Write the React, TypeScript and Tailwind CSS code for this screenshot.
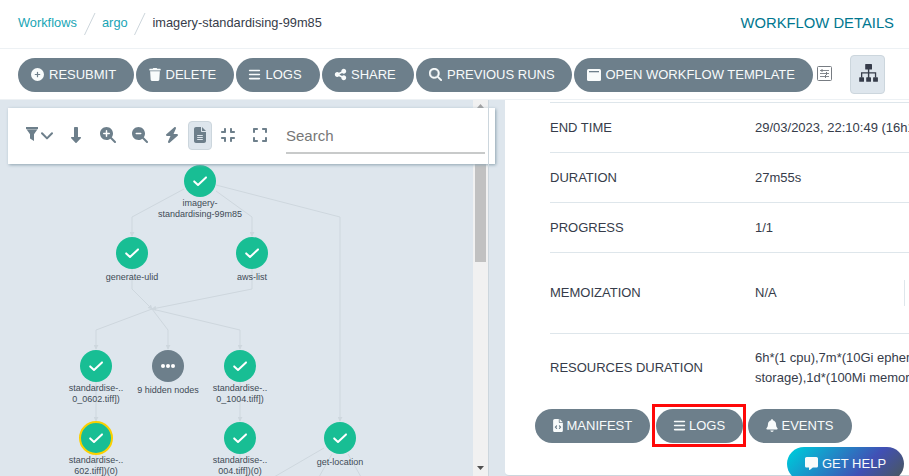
import React from 'react';
import {
  FaBars, FaBell, FaBolt, FaCirclePlus, FaCompress, FaDownLong, FaExpand,
  FaFileCode, FaFileLines, FaMagnifyingGlass, FaMagnifyingGlassMinus, FaMagnifyingGlassPlus,
  FaMessage, FaShareNodes,
} from 'react-icons/fa6';
import { FaTrash } from 'react-icons/fa';

function WindowIcon() {
  return (
    <svg width="14" height="12" viewBox="0 0 14 12">
      <rect width="14" height="12" rx="1.5" fill="#f8fbfb" />
      <rect x="2" y="2" width="10" height="1.3" fill="#6d7f8b" />
    </svg>
  );
}

function FilterIcon() {
  return (
    <svg width="12" height="14" viewBox="0 0 12 14" fill="#6d7f8b">
      <path d="M0 0h12v2H0zM1 3h10L8 7.3V14L4 11.5V7.3z" />
      <path d="M.3 2h11.4l-.7 1H1z" opacity=".65" />
    </svg>
  );
}

function ChevronIcon() {
  return (
    <svg width="12" height="8" viewBox="0 0 12 8" fill="none" stroke="#6d7f8b" strokeWidth="2" strokeLinecap="round" strokeLinejoin="round">
      <path d="M1 1.2L6 6.4L11 1.2" />
    </svg>
  );
}

function SitemapIcon() {
  return (
    <svg width="19" height="18" viewBox="0 0 19 18" fill="#363c4a">
      <rect x="6.2" y="0" width="6.8" height="5.6" rx=".6" />
      <path d="M8.9 5h1.4v9H8.9zM2 8.3h15.2v5.2h-1.3V9.6H3.3v3.9H2z" />
      <rect x=".2" y="13.2" width="4.8" height="4.6" rx=".6" />
      <rect x="7.2" y="13.2" width="4.8" height="4.6" rx=".6" />
      <rect x="14.1" y="13.2" width="4.8" height="4.6" rx=".6" />
    </svg>
  );
}

function SlidersIcon() {
  return (
    <svg width="15" height="15" viewBox="0 0 15 15" fill="none" stroke="#777c82">
      <rect x=".5" y=".5" width="14" height="14" rx="1" />
      <path d="M3 4.5h9M3 7.5h9M3 10.5h9" strokeWidth=".9" />
      <path d="M5 3v3M9.5 6v3M8.5 9v3" />
    </svg>
  );
}

const actions = [
  { label: 'RESUBMIT', icon: <FaCirclePlus size={13} />, width: 'w-[116px]', pad: 'pl-[13px]', gap: 'gap-[5px]' },
  { label: 'DELETE', icon: <FaTrash className="h-[13px] w-[12px]" />, width: 'w-[98px]', pad: 'pl-[13px]', gap: 'gap-[4.5px]' },
  { label: 'LOGS', icon: <FaBars size={13} />, width: 'w-[84px]', pad: 'pl-[12px]', gap: 'gap-[4.5px]' },
  { label: 'SHARE', icon: <FaShareNodes size={13} />, width: 'w-[92px]', pad: 'pl-[12px]', gap: 'gap-[4px]' },
  { label: 'PREVIOUS RUNS', icon: <FaMagnifyingGlass className="stroke-current stroke-[16px]" size={13} />, width: 'w-[156px]', pad: 'pl-[13px]', gap: 'gap-[5px]' },
  { label: 'OPEN WORKFLOW TEMPLATE', icon: <WindowIcon />, width: 'w-[239px]', pad: 'pl-[13px]', gap: 'gap-[4.5px]' },
];

const tools = [
  { name: 'direction', icon: <FaDownLong size={16} /> },
  { name: 'zoom in', icon: <FaMagnifyingGlassPlus size={16} /> },
  { name: 'zoom out', icon: <FaMagnifyingGlassMinus size={16} /> },
  { name: 'fast', icon: <FaBolt size={16} /> },
  { name: 'labels', icon: <FaFileLines size={16} />, active: true },
  { name: 'compress', icon: <FaCompress size={16} /> },
  { name: 'expand', icon: <FaExpand size={16} /> },
];

type GraphNode = { x: number; y: number; lines: string[]; kind?: 'selected' | 'hidden' };

// Node centres inside the graph canvas, whose origin is its top left corner.
const nodes: GraphNode[] = [
  { x: 200, y: 81, lines: ['imagery-', 'standardising-99m85'] },
  { x: 132, y: 153, lines: ['generate-ulid'] },
  { x: 252, y: 153, lines: ['aws-list'] },
  { x: 96, y: 266, lines: ['standardise-..', '0_0602.tiff])'] },
  { x: 168, y: 266, lines: ['9 hidden nodes'], kind: 'hidden' },
  { x: 240, y: 266, lines: ['standardise-..', '0_1004.tiff])'] },
  { x: 96, y: 338, lines: ['standardise-..', '602.tiff])(0)'], kind: 'selected' },
  { x: 240, y: 338, lines: ['standardise-..', '004.tiff])(0)'] },
  { x: 340, y: 338, lines: ['get-location'] },
];

const edges = [
  'M184 89L132 117V136', 'M216 91L252 117V136', 'M216 85L340 117V321',
  'M132 169V189L152 209', 'M252 169V189L152 209',
  'M152 209L96 230V249', 'M152 209L168 230V249', 'M152 209L240 230V249',
  'M96 282V321', 'M240 282V321', 'M96 354V384', 'M240 354V384',
  'M324 348L262 384', 'M332 354L315 384', 'M348 354L365 384',
];

function Node({ x, y, lines, kind }: GraphNode) {
  const single = lines.length === 1;
  return (
    <div className="absolute w-[100px] -translate-x-1/2 text-center" style={{ left: x, top: y - 16 }}>
      <div
        className={`mx-auto flex size-8 items-center justify-center rounded-full ${kind === 'hidden' ? 'bg-[#6d7f8b]' : 'bg-[#18be94]'} ${kind === 'selected' ? 'outline-2 -outline-offset-1 outline-[#fbd000]' : ''}`}
      >
        <svg width="16" height="16" viewBox="0 0 16 16" fill="none" stroke="white" strokeWidth="2" strokeLinecap="round" strokeLinejoin="round">
          {kind === 'hidden'
            ? <g fill="white" stroke="none"><circle cx="3" cy="8" r="2" /><circle cx="8" cy="8" r="2" /><circle cx="13" cy="8" r="2" /></g>
            : <path d="M2.2 8.4L6 12L14 4.4" />}
        </svg>
      </div>
      <div className={`text-[9px] leading-[11px] whitespace-nowrap text-[#3f4b56] ${single ? 'pt-[3px]' : 'pt-px'}`}>
        {lines.map((line) => <div key={line}>{line}</div>)}
      </div>
    </div>
  );
}

function Row({ label, children, height }: { label: string; children: React.ReactNode; height: string }) {
  return (
    <div className={`flex shrink-0 items-center border-t border-[#dee6eb] ${height}`}>
      <div className="w-[205px] shrink-0">{label}</div>
      <div className="whitespace-nowrap leading-5">{children}</div>
    </div>
  );
}

export default function App() {
  return (
    <div className="relative flex h-[476px] w-[909px] flex-col overflow-hidden bg-white font-['Liberation_Sans',Arial,sans-serif] text-[13px] text-[#363c4a]">
      <header className="flex h-[49px] shrink-0 items-center justify-between border-b border-[#edf1f4] pr-[15px] pl-[18px] pb-[2px]">
        <div className="flex items-center text-[12.8px] text-[#18a5b5]">
          <span className="w-[59px] whitespace-nowrap">Workflows</span>
          <svg className="ml-[7px] mt-[2px]" width="12" height="22"><path d="M.5 22L11 0" stroke="#ccd5db" /></svg>
          <span className="ml-[6px] w-[25px]">argo</span>
          <svg className="ml-[7px] mt-[2px]" width="12" height="22"><path d="M.5 22L11 0" stroke="#ccd5db" /></svg>
          <span className="ml-[6.5px] text-[#363c4a]">imagery-standardising-99m85</span>
        </div>
        <div className="pt-px text-[14.8px] text-[#007790]">WORKFLOW DETAILS</div>
      </header>

      <nav className="flex h-[51px] shrink-0 items-center border-b border-[#edf1f4] pl-[18px]">
        <div className="mt-px flex gap-[2px]">
          {actions.map((a) => (
            <button key={a.label} className={`flex h-[34px] shrink-0 items-center rounded-full bg-[#6d7f8b] whitespace-nowrap text-[#f8fbfb] ${a.width} ${a.pad} ${a.gap}`}>
              {a.icon}<span>{a.label}</span>
            </button>
          ))}
        </div>
        <div className="ml-1 mb-px"><SlidersIcon /></div>
        <button className="ml-[18px] flex h-[39px] w-[35px] items-center justify-center rounded border border-[#ccd6dd] bg-[#dee6ed] pb-[2px] pl-px">
          <SitemapIcon />
        </button>
      </nav>

      <main className="flex min-h-0 flex-1">
        <section className="relative w-[489px] shrink-0 bg-[#dee6ed]">
          <svg className="absolute inset-0" width="473" height="376" fill="none" stroke="#ced7de">
            <defs>
              <marker id="arrow" viewBox="0 0 6 6" refX="5" refY="3" markerWidth="5" markerHeight="5" orient="auto" markerUnits="userSpaceOnUse">
                <path d="M0 0L6 3L0 6z" fill="#ced7de" stroke="none" />
              </marker>
            </defs>
            {edges.map((d) => <path key={d} d={d} markerEnd="url(#arrow)" />)}
          </svg>
          {nodes.map((n) => <Node key={`${n.x}-${n.y}`} {...n} />)}

          <div className="absolute inset-y-0 right-0 flex w-4 flex-col items-center justify-between border-r border-[#ccd6dd] bg-[#f1f1f1]">
            <svg className="mt-1" width="7" height="4"><path d="M0 4L3.5 0L7 4z" fill="#a3a3a3" /></svg>
            <div className="mb-[214px] h-[150px] w-[11px] shrink-0 bg-[#c1c1c1]" />
            <svg className="absolute bottom-[6px]" width="7" height="4"><path d="M0 0L3.5 4L7 0z" fill="#505050" /></svg>
          </div>

          <div className="absolute top-2 left-2 z-10 flex h-14 w-[487px] items-center bg-white pl-[18px] text-[#6d7f8b] shadow-[1px_1px_3px_#8fa4b1]">
            <div className="mb-[5px] mr-[11px] flex items-center gap-[3px]">
              <FilterIcon /><div className="mt-[5px]"><ChevronIcon /></div>
            </div>
            <div className="mb-[2px] flex gap-2">
              {tools.map((t) => (
                <button key={t.name} aria-label={t.name} className={`flex h-[29px] w-6 items-center justify-center rounded ${t.active ? '-mx-1 border border-[#ccd6dd] bg-[#dee6ed]' : ''}`}>
                  {t.icon}
                </button>
              ))}
            </div>
            <div className="ml-[14px] mb-px flex h-[36px] w-[199px] items-center border-b-2 border-[#c8caca] pt-[3px] text-[15px] text-[#777]">Search</div>
          </div>
          <div className="absolute inset-y-0 right-0 z-20 w-px bg-[#ccd6dd]" />
        </section>

        <section className="flex min-w-0 flex-1 bg-[#dee6ed] pl-4">
          <div className="flex min-w-0 flex-1 flex-col rounded-bl border-b border-[#ccd6dd] bg-white pt-[2px]">
            <div className="ml-[45px] flex flex-col">
              <Row label="END TIME" height="h-[50px]">29/03/2023, 22:10:49 (16h1</Row>
              <Row label="DURATION" height="h-[50px]">27m55s</Row>
              <Row label="PROGRESS" height="h-[50px]">1/1</Row>
              <Row label="MEMOIZATION" height="h-[81px]">
                <div className="flex h-[26px] w-[150px] items-center border-r border-[#dee6eb]">N/A</div>
              </Row>
              <Row label="RESOURCES DURATION" height="h-[68px]">
                <div>6h*(1 cpu),7m*(10Gi ephem</div>
                <div>storage),1d*(100Mi memor</div>
              </Row>
            </div>
            <div className="mt-[3px] ml-[30px] flex h-[43px] shrink-0 items-center text-[#f8fbfb]">
              <button className="flex h-[34px] w-[115px] items-center gap-[3.5px] rounded-full bg-[#6d7f8b] pl-[18px]"><FaFileCode className="h-[13px] w-[10px]" />MANIFEST</button>
              <div className="ml-[2px] flex h-[43px] w-[94px] items-center justify-center border-3 border-[#ff0808]">
                <button className="flex h-[34px] w-[87px] items-center gap-[3.5px] rounded-full bg-[#6d7f8b] pl-[17px]"><FaBars size={13} />LOGS</button>
              </div>
              <button className="ml-[2px] flex h-[34px] w-[104px] items-center gap-[3.5px] rounded-full bg-[#6d7f8b] pl-[18px]"><FaBell className="h-[13px] w-[12px]" />EVENTS</button>
            </div>
          </div>
        </section>
      </main>

      <button className="absolute top-[447px] left-[787px] z-30 flex h-[34px] w-[117px] items-center gap-[4px] rounded-full bg-[linear-gradient(135deg,#00c2d8_8%,#4150b5_65%,#495763_95%)] pl-[18px] text-[#f8fbfb]">
        <FaMessage className="mb-[2px]" size={13} />GET HELP
      </button>
    </div>
  );
}
